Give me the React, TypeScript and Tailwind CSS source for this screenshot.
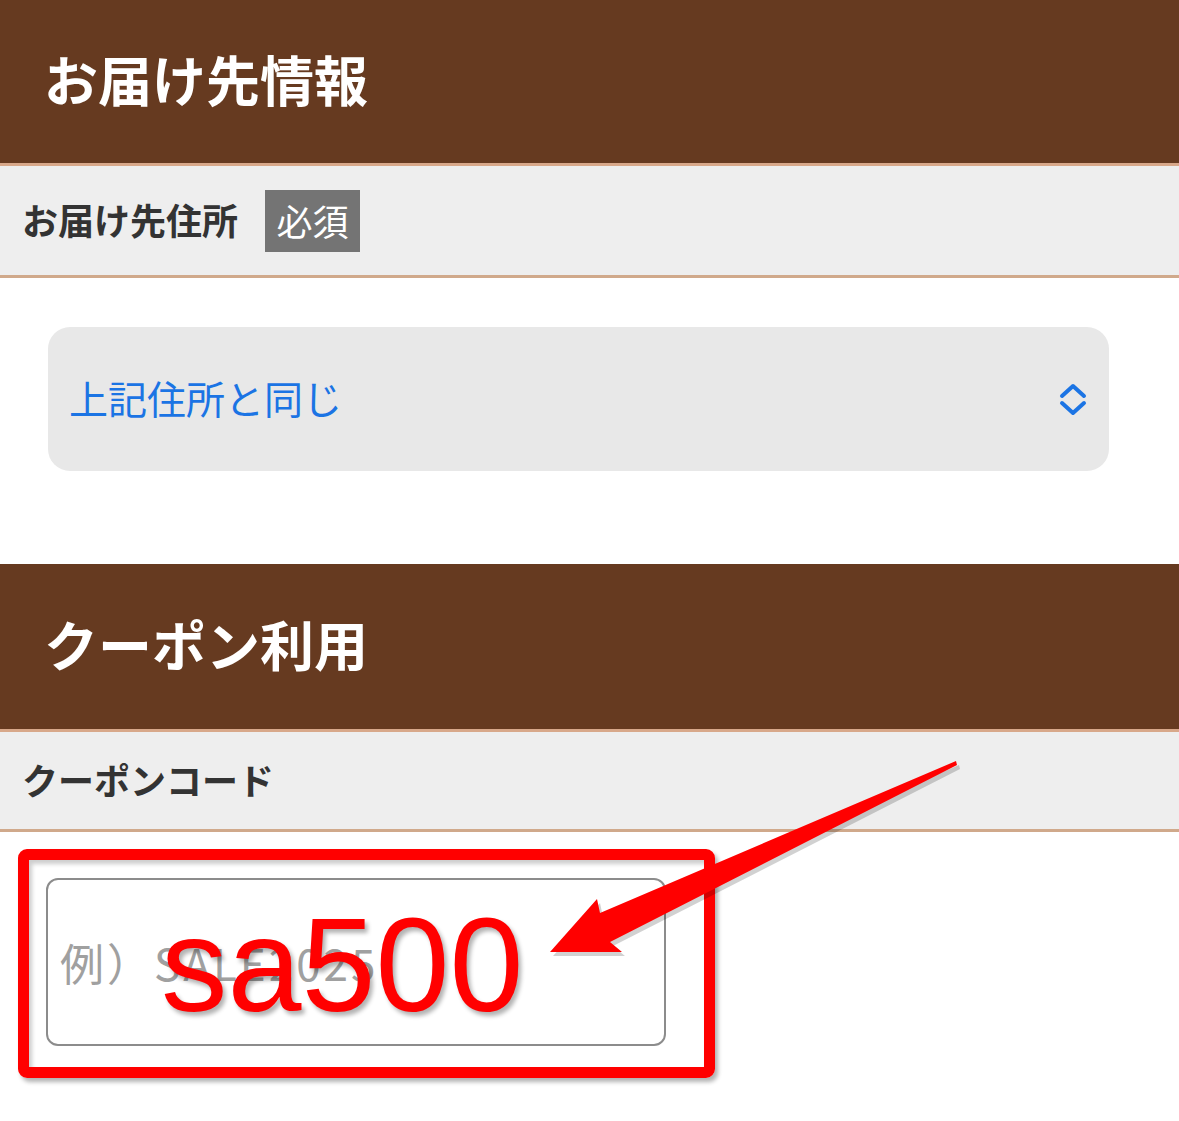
import React from "react";

export default function App() {
  return (
    <div className="relative w-[1179px] min-h-[1121px] bg-white font-['Noto_Sans_CJK_JP',sans-serif]">
      {/* Section 1 */}
      <div className="h-[166px] bg-[#663a20] border-b-[3px] border-[#d8a88a] flex items-center pl-[44px] pb-[5px]">
        <h2 className="text-white text-[54px] font-bold leading-none">お届け先情報</h2>
      </div>
      <div className="h-[112px] bg-[#eeeeee] border-b-[3px] border-[#d0a98b] flex items-center pl-[22px] gap-[27px]">
        <span className="text-[#333333] text-[36px] font-bold leading-none pb-[3px]">お届け先住所</span>
        <span className="w-[95px] h-[62px] bg-[#747474] text-white text-[36px] leading-none flex items-center justify-center pb-[2px]">必須</span>
      </div>
      <div className="pt-[49px] pb-[93px] pl-[48px] pr-[70px]">
        <div className="h-[144px] rounded-[22px] bg-[#e8e8e8] flex items-center justify-between pl-[21px] pr-[21px]">
          <span className="text-[#1b74e4] text-[39px] leading-none pb-[3px]">上記住所と同じ</span>
          <svg width="30" height="34" viewBox="0 0 30 34" fill="none" stroke="#1b74e4" strokeWidth="4" strokeLinecap="round" strokeLinejoin="round">
            <polyline points="4,14 15,4 26,14" />
            <polyline points="4,21 15,31 26,21" />
          </svg>
        </div>
      </div>

      {/* Section 2 */}
      <div className="h-[168px] bg-[#663a20] border-b-[3px] border-[#d8a88a] flex items-center pl-[44px] pb-[5px]">
        <h2 className="text-white text-[54px] font-bold leading-none">クーポン利用</h2>
      </div>
      <div className="h-[100px] bg-[#eeeeee] border-b-[3px] border-[#d0a98b] flex items-center pl-[22px]">
        <span className="text-[#333333] text-[36px] font-bold leading-none pb-[3px]">クーポンコード</span>
      </div>
      <div className="pt-[46px] pl-[46px]">
        <div className="w-[620px] h-[168px] border-2 border-[#8c8c8c] rounded-[12px] flex items-center pl-[12px]">
          <span className="text-[#a0a0a0] text-[44px] leading-none tracking-[3px]">例）SALE2025</span>
        </div>
      </div>

      {/* Annotation overlays */}
      <div className="absolute left-[18px] top-[849px] w-[697px] h-[229px] border-[11px] border-[#ff0000] rounded-[9px] shadow-[3px_4px_4px_rgba(0,0,0,0.3),inset_3px_4px_4px_rgba(0,0,0,0.2)]" />
      <div className="absolute left-[161px] top-[899px] text-[#ff0000] text-[133px] leading-none font-['Liberation_Sans',sans-serif] [text-shadow:3px_4px_4px_rgba(0,0,0,0.3)]">
        sa500
      </div>
      <svg className="absolute left-[540px] top-[750px]" width="430" height="215" viewBox="540 750 430 215">
        <polygon points="959,765 603,917 600,903 553,956 625,956 613,946 960,769" fill="rgba(0,0,0,0.18)" />
        <polygon points="956,761 600,913 597,899 550,952 622,952 610,942 957,765" fill="#ff0000" />
      </svg>
    </div>
  );
}
